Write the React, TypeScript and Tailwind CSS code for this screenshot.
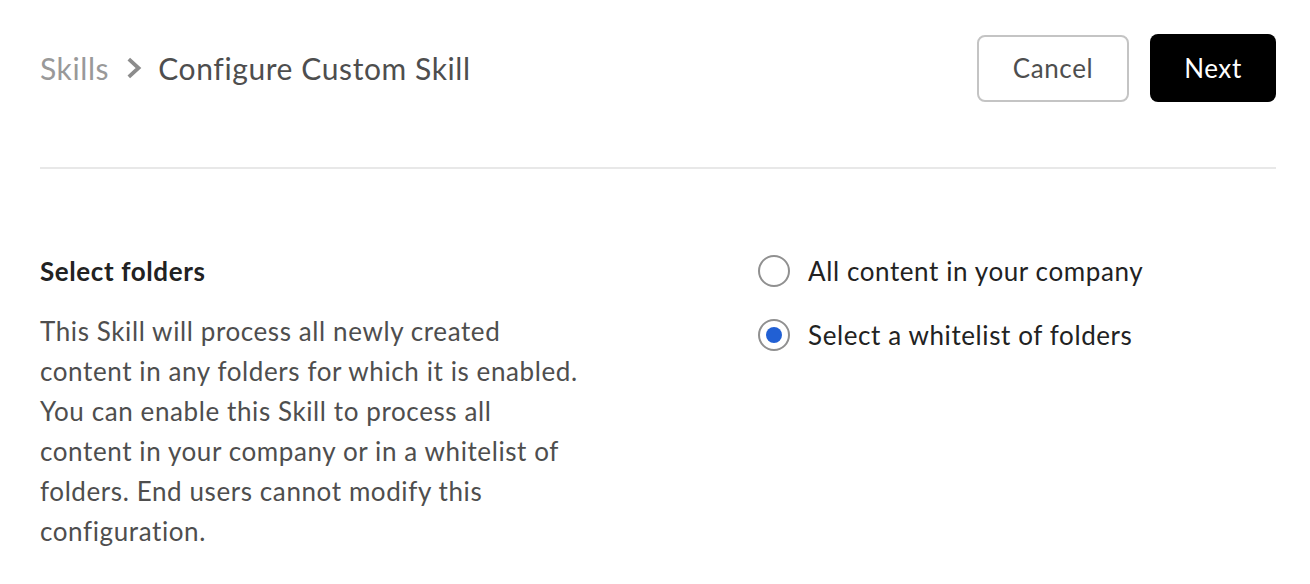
export default function App() {
  return (
    <div
      className="min-h-screen w-full bg-white pl-10 pr-[34px] tracking-[0.6px]"
      style={{ fontFamily: "Lato, 'Open Sans', sans-serif" }}
    >
      {/* Header */}
      <div className="flex h-[169px] items-start justify-between border-b-2 border-[#e8e8e8] pt-[34px]">
        <div className="flex h-[68px] items-center text-[30px] leading-none">
          <span className="text-[#999999]">Skills</span>
          <svg
            className="ml-[18px] mr-[16px] h-[22px] w-[15px]"
            viewBox="0 0 15 22"
            fill="none"
          >
            <path
              d="M1.8 2.2 L11.5 11 L1.8 19.8"
              stroke="#8c8c8c"
              strokeWidth="3.8"
            />
          </svg>
          <span className="text-[#4e4e4e]">Configure Custom Skill</span>
        </div>
        <div className="flex items-center gap-[21px]">
          <button className="h-[67px] w-[152px] rounded-[8px] border-2 border-[#c4c4c4] bg-white text-[26px] text-[#4e4e4e]">
            Cancel
          </button>
          <button className="h-[68px] w-[126px] rounded-[8px] bg-black text-[26px] text-white">
            Next
          </button>
        </div>
      </div>

      {/* Body */}
      <div className="flex pt-[84px]">
        <div className="w-[718px] shrink-0">
          <h2 className="text-[26px] font-bold leading-[36px] text-[#222222]">
            Select folders
          </h2>
          <p className="mt-[22px] w-[545px] text-[26px] leading-[40px] text-[#4e4e4e]">
            This Skill will process all newly created content in any folders
            for which it is enabled. You can enable this Skill to process all
            content in your company or in a whitelist of folders. End users
            cannot modify this configuration.
          </p>
        </div>
        <div className="flex flex-col gap-[28px]">
          <label className="flex items-center gap-[18px]">
            <span className="flex h-[32px] w-[32px] items-center justify-center rounded-full border-2 border-[#909090] bg-white" />
            <span className="text-[26px] leading-[36px] text-[#222222]">
              All content in your company
            </span>
          </label>
          <label className="flex items-center gap-[18px]">
            <span className="flex h-[32px] w-[32px] items-center justify-center rounded-full border-2 border-[#909090] bg-white">
              <span className="h-[16px] w-[16px] rounded-full bg-[#2160d4]" />
            </span>
            <span className="text-[26px] leading-[36px] text-[#222222]">
              Select a whitelist of folders
            </span>
          </label>
        </div>
      </div>
    </div>
  );
}
